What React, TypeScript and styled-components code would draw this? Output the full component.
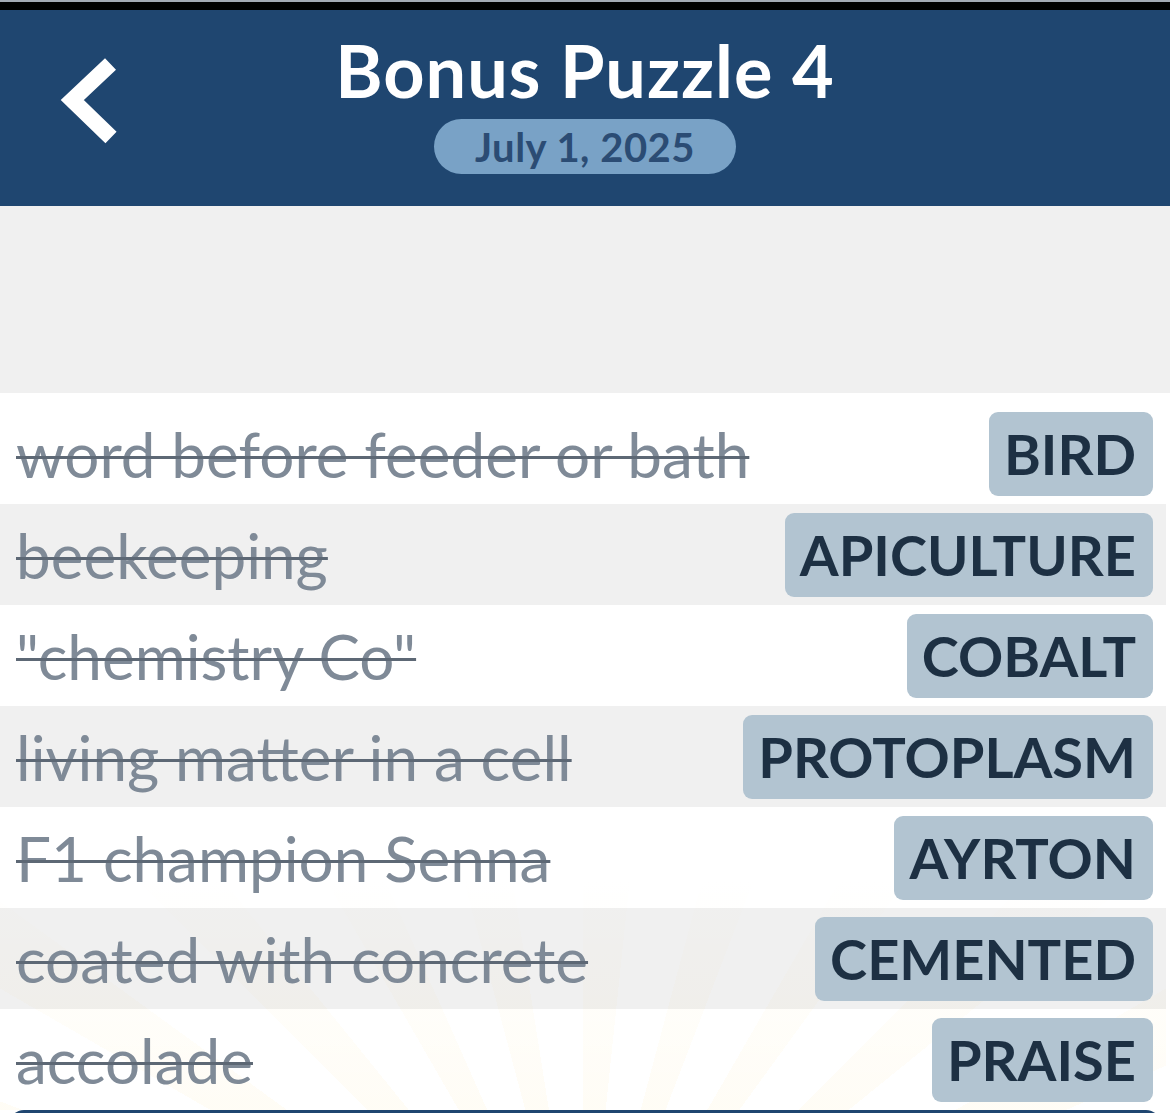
import * as React from "react"
import styled, { createGlobalStyle } from "styled-components"

interface IClue {
  clue: string
  answer: string
}

const clues: IClue[] = [
  { clue: "word before feeder or bath", answer: "BIRD" },
  { clue: "beekeeping", answer: "APICULTURE" },
  { clue: "\"chemistry Co\"", answer: "COBALT" },
  { clue: "living matter in a cell", answer: "PROTOPLASM" },
  { clue: "F1 champion Senna", answer: "AYRTON" },
  { clue: "coated with concrete", answer: "CEMENTED" },
  { clue: "accolade", answer: "PRAISE" },
]

const GlobalStyle = createGlobalStyle`
  html, body {
    margin: 0;
    padding: 0;
    background: #ffffff;
    overflow: hidden;
  }
  body {
    font-family: "Lato", "Noto Sans", sans-serif;
  }
`

const BackIcon = () => (
  <svg width="80" height="110" viewBox="0 0 80 110">
    <polyline
      points="60.5,19 22.3,55 61,92.5"
      fill="none"
      stroke="#ffffff"
      strokeWidth="16"
      strokeLinejoin="miter"
      strokeLinecap="butt"
    />
  </svg>
)

export default function App() {
  return (
    <Page>
      <GlobalStyle />
      <StatusStrip />
      <Header>
        <BackButton aria-label="Back">
          <BackIcon />
        </BackButton>
        <TitleBlock>
          <Title>Bonus Puzzle 4</Title>
          <DatePill>July 1, 2025</DatePill>
        </TitleBlock>
        <div />
      </Header>
      <Spacer />
      <ClueList>
        {clues.map((c, i) => (
          <ClueRow key={c.answer} shaded={i % 2 === 1}>
            <ClueText>{c.clue}</ClueText>
            <Answer>{c.answer}</Answer>
          </ClueRow>
        ))}
      </ClueList>
      <FooterButton />
    </Page>
  )
}

const Page = styled.div`
  width: 1170px;
  min-height: 1113px;
  display: flex;
  flex-direction: column;
`

const StatusStrip = styled.div`
  height: 8px;
  background: #000000;
  border-top: 2px solid #a3aab4;
`

const Header = styled.header`
  display: grid;
  grid-template-columns: 1fr auto 1fr;
  height: 196px;
  background: #1f4670;
`

const BackButton = styled.div`
  align-self: start;
  padding: 35px 0 0 50px;
  line-height: 0;
`

const TitleBlock = styled.div`
  display: flex;
  flex-direction: column;
  align-items: center;
  padding-top: 24px;
`

const Title = styled.h1`
  margin: 0;
  font-family: "Lato", "Noto Sans", sans-serif;
  font-weight: 700;
  font-size: 72px;
  letter-spacing: 1px;
  line-height: 1;
  color: #ffffff;
`

const DatePill = styled.div`
  margin-top: 13px;
  height: 55px;
  padding: 0 41px;
  display: flex;
  align-items: center;
  border-radius: 28px;
  background: #79a2c6;
  color: #2b4c74;
  font-size: 40px;
  font-weight: 700;
  letter-spacing: 0.5px;
`

const Spacer = styled.div`
  height: 187px;
  background: #f0f0f0;
`

const ClueList = styled.div`
  margin-right: 4px;
  padding-top: 10px;
  background:
    linear-gradient(to bottom, #ffffff 0%, #ffffff 68%, rgba(255, 255, 255, 0) 100%),
    repeating-conic-gradient(
      from 0deg at 50% 130%,
      rgba(255, 220, 120, 0.07) 0deg 6deg,
      rgba(255, 255, 255, 0) 6deg 15deg
    ),
    #ffffff;
`

const ClueRow = styled.div<{ shaded: boolean }>`
  height: 101px;
  display: flex;
  align-items: center;
  justify-content: space-between;
  padding: 0 13px 0 16px;
  background: ${p => (p.shaded ? "rgba(0, 0, 0, 0.06)" : "transparent")};
`

const ClueText = styled.span`
  font-size: 62px;
  font-weight: 400;
  color: #7f8a97;
  text-decoration: line-through;
  text-decoration-color: #5d6875;
  text-decoration-thickness: 3px;
  white-space: nowrap;
`

const Answer = styled.span`
  height: 84px;
  display: flex;
  align-items: center;
  padding: 0 17px 0 15px;
  border-radius: 9px;
  background: #b2c4d1;
  color: #1d3043;
  font-size: 56px;
  font-weight: 700;
  white-space: nowrap;
`

const FooterButton = styled.div`
  height: 60px;
  margin: 0 10px;
  border-radius: 14px 14px 0 0;
  background: #1f4670;
`
